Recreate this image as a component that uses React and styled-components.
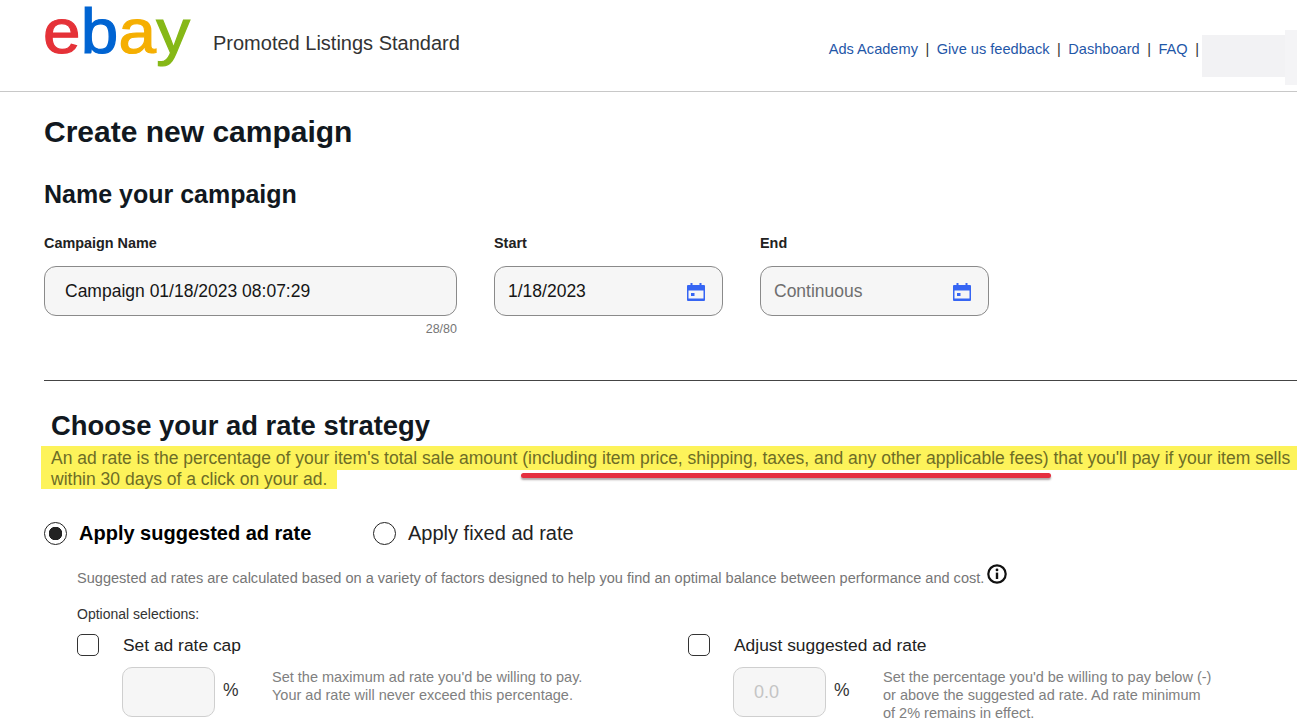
import styled, { createGlobalStyle } from "styled-components";

const GlobalStyle = createGlobalStyle`
  html, body {
    margin: 0;
    padding: 0;
    height: 728px;
    overflow: hidden;
    background: #fff;
    font-family: "Liberation Sans", Arial, sans-serif;
    color: #111820;
  }
`;

function CalendarIcon() {
  return (
    <CalendarSvg width="18" height="18" viewBox="0 0 18 18">
      <path
        fill="#3665f3"
        fillRule="evenodd"
        d="M3.5 0h2v2h7V0h2v2H17a1 1 0 0 1 1 1v14a1 1 0 0 1-1 1H1a1 1 0 0 1-1-1V3a1 1 0 0 1 1-1h2.5zM1.5 7.5v8h15v-8zM4 10h3.5v3H4z"
      />
    </CalendarSvg>
  );
}

function InfoIcon() {
  return (
    <svg width="20" height="20" viewBox="0 0 20 20">
      <circle cx="10" cy="10" r="8.7" fill="none" stroke="#111" strokeWidth="2.2" />
      <circle cx="10" cy="5.9" r="1.4" fill="#111" />
      <rect x="8.8" y="8.6" width="2.4" height="6.4" fill="#111" />
    </svg>
  );
}

export default function App() {
  return (
    <>
      <GlobalStyle />
      <Header>
        <Logo>
          <LogoLetter $color="#e53238">e</LogoLetter>
          <LogoLetter $color="#0064d2">b</LogoLetter>
          <LogoLetter $color="#f5af02">a</LogoLetter>
          <LogoLetter $color="#86b817">y</LogoLetter>
        </Logo>
        <ProductName>Promoted Listings Standard</ProductName>
        <NavLinks>
          <NavLink>Ads Academy</NavLink>
          <Pipe>|</Pipe>
          <NavLink>Give us feedback</NavLink>
          <Pipe>|</Pipe>
          <NavLink>Dashboard</NavLink>
          <Pipe>|</Pipe>
          <NavLink>FAQ</NavLink>
          <Pipe>|</Pipe>
        </NavLinks>
        <Redacted>
          <RedactedMain />
          <RedactedEdge />
        </Redacted>
      </Header>

      <Main>
        <PageTitle>Create new campaign</PageTitle>
        <SectionTitle>Name your campaign</SectionTitle>
        <FieldRow>
          <Field $width="413px" $mr="37px">
            <FieldLabel>Campaign Name</FieldLabel>
            <InputBox $pad="20px">Campaign 01/18/2023 08:07:29</InputBox>
            <Counter>28/80</Counter>
          </Field>
          <Field $width="229px" $mr="37px">
            <FieldLabel>Start</FieldLabel>
            <InputBox $pad="13px">
              1/18/2023
              <CalendarIcon />
            </InputBox>
          </Field>
          <Field $width="229px">
            <FieldLabel>End</FieldLabel>
            <InputBox $pad="13px" $muted>
              Continuous
              <CalendarIcon />
            </InputBox>
          </Field>
        </FieldRow>

        <Divider />

        <StrategyTitle>Choose your ad rate strategy</StrategyTitle>
        <Highlighted>
          <HighlightLine>
            An ad rate is the percentage of your item's total sale amount
            (including item price, shipping, taxes, and any other applicable
            fees) that you'll pay if your item sells
          </HighlightLine>
          <HighlightLine $short>within 30 days of a click on your ad.</HighlightLine>
          <RedUnderline />
        </Highlighted>

        <RadioRow>
          <RadioOption $width="329px">
            <Radio $checked />
            <RadioLabel $bold>Apply suggested ad rate</RadioLabel>
          </RadioOption>
          <RadioOption>
            <Radio />
            <RadioLabel>Apply fixed ad rate</RadioLabel>
          </RadioOption>
        </RadioRow>

        <Indented>
          <Description>
            Suggested ad rates are calculated based on a variety of factors
            designed to help you find an optimal balance between performance
            and cost.
            <InfoIcon />
          </Description>
          <OptionalLabel>Optional selections:</OptionalLabel>
          <OptionColumns>
            <Option>
              <OptionHead>
                <Checkbox />
                <OptionTitle>Set ad rate cap</OptionTitle>
              </OptionHead>
              <OptionBody>
                <RateInput />
                <Percent>%</Percent>
                <Help>
                  Set the maximum ad rate you'd be willing to pay.
                  <br />
                  Your ad rate will never exceed this percentage.
                </Help>
              </OptionBody>
            </Option>
            <Option>
              <OptionHead>
                <Checkbox />
                <OptionTitle>Adjust suggested ad rate</OptionTitle>
              </OptionHead>
              <OptionBody>
                <RateInput>0.0</RateInput>
                <Percent>%</Percent>
                <Help>
                  Set the percentage you'd be willing to pay below (-)
                  <br />
                  or above the suggested ad rate. Ad rate minimum
                  <br />
                  of 2% remains in effect.
                </Help>
              </OptionBody>
            </Option>
          </OptionColumns>
        </Indented>
      </Main>
    </>
  );
}

const Header = styled.header`
  height: 91px;
  border-bottom: 1px solid #c8c8c8;
  display: flex;
  align-items: flex-start;
  position: relative;
`;

const Logo = styled.div`
  margin-left: 43px;
  width: 170px;
  font-size: 63px;
  line-height: 62px;
  letter-spacing: 0.2px;
  -webkit-text-stroke: 1.2px;
  transform: scaleX(1.07);
  transform-origin: left center;
`;

const LogoLetter = styled.span`
  color: ${(p) => p.$color};
`;

const ProductName = styled.div`
  margin-top: 31px;
  font-size: 20px;
  line-height: 24px;
  color: #333;
`;

const NavLinks = styled.nav`
  margin: 40px 0 0 auto;
  display: flex;
  gap: 7.5px;
  font-size: 14.6px;
  line-height: 18px;
`;

const NavLink = styled.a`
  color: #1f57a8;
`;

const Pipe = styled.span`
  color: #333;
`;

const Redacted = styled.div`
  margin: 30px 0 0 3px;
  display: flex;
  align-items: flex-start;
`;

const RedactedMain = styled.div`
  width: 83px;
  height: 42px;
  margin-top: 5px;
  background: #f2f2f4;
`;

const RedactedEdge = styled.div`
  width: 12px;
  height: 55px;
  background: #f4f4f6;
`;

const Main = styled.main`
  padding-left: 44px;
`;

const PageTitle = styled.h1`
  margin: 22px 0 0;
  font-size: 30px;
  line-height: 36px;
  font-weight: 700;
`;

const SectionTitle = styled.h2`
  margin: 29px 0 0;
  font-size: 25px;
  line-height: 30px;
  font-weight: 700;
`;

const FieldRow = styled.div`
  margin-top: 26px;
  display: flex;
`;

const Field = styled.div`
  width: ${(p) => p.$width};
  margin-right: ${(p) => p.$mr || 0};
`;

const FieldLabel = styled.div`
  font-size: 14.4px;
  line-height: 17px;
  font-weight: 700;
  color: #222;
  margin-bottom: 14px;
`;

const InputBox = styled.div`
  box-sizing: border-box;
  height: 50px;
  border: 1px solid #8a8a8a;
  border-radius: 12px;
  background: #f6f6f6;
  padding: 0 17px 0 ${(p) => p.$pad};
  display: flex;
  align-items: center;
  justify-content: space-between;
  font-size: 17.5px;
  color: ${(p) => (p.$muted ? "#6e6e6e" : "#151515")};
`;

const CalendarSvg = styled.svg`
  margin-top: 2px;
`;

const Counter = styled.div`
  margin-top: 6px;
  text-align: right;
  font-size: 12.5px;
  line-height: 14px;
  color: #767676;
`;

const Divider = styled.hr`
  margin: 44px 0 0;
  border: 0;
  height: 1px;
  background: #444;
`;

const StrategyTitle = styled.h2`
  margin: 28px 0 0 7px;
  font-size: 27.4px;
  line-height: 34px;
  font-weight: 700;
`;

const Highlighted = styled.div`
  margin: 3px 0 0 -3px;
  position: relative;
  font-size: 17.5px;
  color: #6d6d26;
`;

const HighlightLine = styled.div`
  background: #fdf35a;
  white-space: nowrap;
  padding-left: 10px;
  height: ${(p) => (p.$short ? "19px" : "24px")};
  line-height: ${(p) => (p.$short ? "18px" : "24px")};
  width: ${(p) => (p.$short ? "286px" : "auto")};
`;

const RedUnderline = styled.div`
  position: absolute;
  left: 480px;
  top: 27px;
  width: 530px;
  height: 5px;
  border-radius: 3px;
  background: #e5303f;
  box-shadow: 0 2px 2px rgba(80, 60, 60, 0.45);
`;

const RadioRow = styled.div`
  margin-top: 32px;
  display: flex;
`;

const RadioOption = styled.label`
  display: flex;
  align-items: center;
  gap: 12px;
  width: ${(p) => p.$width || "auto"};
`;

const Radio = styled.span`
  box-sizing: border-box;
  width: 23px;
  height: 23px;
  border-radius: 50%;
  border: 1.5px solid #222;
  background: ${(p) =>
    p.$checked ? "radial-gradient(circle, #222 0 6.5px, #fff 7px)" : "#fff"};
`;

const RadioLabel = styled.span`
  font-size: 20px;
  line-height: 24px;
  font-weight: ${(p) => (p.$bold ? 700 : 400)};
  color: ${(p) => (p.$bold ? "#000" : "#222")};
`;

const Indented = styled.div`
  margin-top: 21px;
  padding-left: 33px;
`;

const Description = styled.div`
  display: flex;
  align-items: flex-start;
  gap: 3px;
  font-size: 14.56px;
  line-height: 20px;
  padding-top: 2px;
  color: #767676;
  white-space: nowrap;

  svg {
    margin-top: -4px;
  }
`;

const OptionalLabel = styled.div`
  margin-top: 17px;
  font-size: 14px;
  line-height: 18px;
  color: #333;
`;

const OptionColumns = styled.div`
  margin-top: 10px;
  display: grid;
  grid-template-columns: 611px 1fr;
`;

const Option = styled.div``;

const OptionHead = styled.div`
  display: flex;
  align-items: center;
  gap: 24px;
`;

const Checkbox = styled.span`
  box-sizing: border-box;
  width: 22px;
  height: 22px;
  border: 1.5px solid #333;
  border-radius: 5px;
  background: #fff;
`;

const OptionTitle = styled.span`
  font-size: 17.4px;
  line-height: 24px;
  color: #222;
`;

const OptionBody = styled.div`
  margin-top: 10px;
  padding-left: 45px;
  display: flex;
  align-items: flex-start;
`;

const RateInput = styled.div`
  box-sizing: border-box;
  width: 93px;
  height: 50px;
  border: 1px solid #cfcfcf;
  border-radius: 10px;
  background: #f6f6f6;
  padding-left: 20px;
  font-size: 18px;
  line-height: 48px;
  color: #c4c4c4;
`;

const Percent = styled.span`
  margin: 12px 0 0 8px;
  width: 49px;
  font-size: 17.5px;
  line-height: 22px;
  color: #333;
`;

const Help = styled.div`
  margin-top: 1px;
  font-size: 14.5px;
  line-height: 18px;
  color: #808080;
  white-space: nowrap;
`;
